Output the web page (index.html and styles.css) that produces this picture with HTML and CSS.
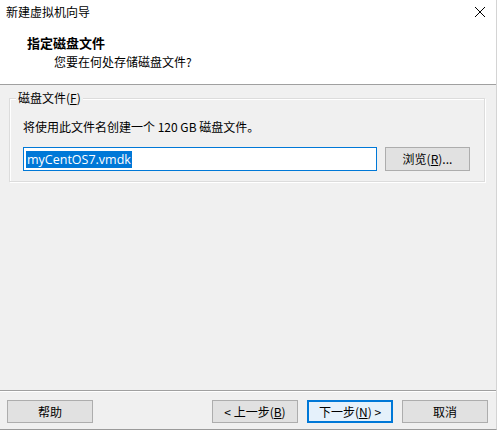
FILE: index.html
```html
<!DOCTYPE html>
<html lang="zh-CN">
<head>
<meta charset="utf-8">
<title>新建虚拟机向导</title>
<link rel="stylesheet" href="styles.css">
</head>
<body>
<div class="window">
  <div class="titlebar">
    <span class="title">新建虚拟机向导</span>
    <svg class="close" width="12" height="12" viewBox="0 0 12 12"><path d="M1 1 L11 11 M11 1 L1 11" stroke="#000" stroke-width="1" fill="none"/></svg>
  </div>
  <div class="header">
    <div class="h-title">指定磁盘文件</div>
    <div class="h-sub">您要在何处存储磁盘文件?</div>
  </div>
  <div class="content">
    <div class="group">
      <div class="legend">磁盘文件(<u>F</u>)</div>
      <div class="desc">将使用此文件名创建一个 120 GB 磁盘文件。</div>
      <div class="row">
        <div class="input"><span class="sel">myCentOS7.vmdk</span></div>
        <div class="btn browse">浏览(<u>R</u>)...</div>
      </div>
    </div>
  </div>
  <div class="footer">
    <div class="btn help">帮助</div>
    <div class="spacer"></div>
    <div class="btn">&lt; 上一步(<u>B</u>)</div>
    <div class="btn primary">下一步(<u>N</u>) &gt;</div>
    <div class="btn">取消</div>
  </div>
</div>
</body>
</html>
```
FILE: styles.css
```css
html, body {
  margin: 0;
  padding: 0;
}
body {
  width: 497px;
  height: 430px;
  overflow: hidden;
  background: #f0f0f0;
  font-family: "Noto Sans CJK SC", "Liberation Sans", sans-serif;
  font-size: 12px;
  color: #000;
}
.window {
  width: 497px;
  height: 430px;
  display: flex;
  flex-direction: column;
  box-sizing: border-box;
  border-right: 1px solid #d4d4d4;
  border-bottom: 1px solid #9a9a9a;
}
.titlebar {
  height: 26px;
  background: #fff;
  display: flex;
  align-items: center;
  justify-content: space-between;
  padding: 0 10px 0 6px;
  flex: none;
}
.title {
  line-height: 16px;
  margin-top: -2px;
}
.close {
  display: block;
  margin-top: -2px;
}
.header {
  background: #fff;
  height: 58px;
  border-bottom: 1px solid #a0a0a0;
  flex: none;
  box-sizing: content-box;
}
.h-title {
  font-weight: bold;
  font-size: 13px;
  line-height: 16px;
  padding: 9px 0 0 27px;
}
.h-sub {
  line-height: 16px;
  padding: 3px 0 0 54px;
}
.content {
  flex: 1;
  padding: 13px 11px 0 9px;
}
.group {
  border: 1px solid #dcdcdc;
  box-shadow: inset 1px 1px 0 #fff, 1px 1px 0 #fff;
  height: 84px;
  box-sizing: border-box;
  padding: 0 13px 0 13px;
  position: relative;
}
.legend {
  position: absolute;
  top: -9px;
  left: 6px;
  background: #f0f0f0;
  padding: 0 2px;
  line-height: 16px;
}
.desc {
  padding: 20px 0 0 0;
  line-height: 16px;
}
.row {
  display: flex;
  margin-top: 12px;
  gap: 8px;
}
.input {
  width: 354px;
  height: 24px;
  box-sizing: border-box;
  border: 1px solid #0078d7;
  background: #fff;
  display: flex;
  align-items: center;
  padding-left: 2px;
}
.sel {
  background: #0078d7;
  color: #fff;
  font-family: "Open Sans", "Liberation Sans", sans-serif;
  font-size: 12.5px;
  line-height: 17px;
  padding: 0 1px;
}
.btn {
  width: 86px;
  height: 23px;
  box-sizing: border-box;
  background: #e1e1e1;
  border: 1px solid #adadad;
  display: flex;
  align-items: center;
  justify-content: center;
  line-height: 16px;
}
.browse {
  width: 85px;
  height: 24px;
}
.footer {
  flex: none;
  height: 39px;
  border-top: 1px solid #a0a0a0;
  box-shadow: inset 0 1px 0 #fff;
  display: flex;
  padding: 9px 8px 0 7px;
  gap: 9px;
  box-sizing: border-box;
}
.spacer {
  flex: 1;
}
.primary {
  border: 2px solid #0078d7;
  background: #e5f1fb;
}
```
